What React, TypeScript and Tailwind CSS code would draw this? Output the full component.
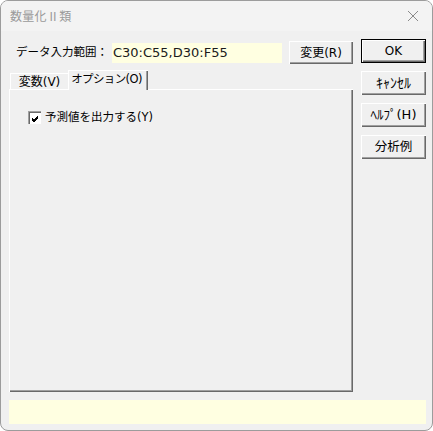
import React from "react";

const jp = { fontFamily: '"DejaVu Sans", "Noto Sans CJK JP", sans-serif' };

function Btn({ label, def, size }: { label: string; def?: boolean; size?: string }) {
  return (
    <div
      className={
        "w-[65px] h-[24px] flex items-center justify-center whitespace-nowrap text-black bg-[#f0f0f0] " +
        (size ?? "text-[12px]") +
        " " +
        (def
          ? "border border-black shadow-[inset_1px_1px_0_#ffffff,inset_-1px_-1px_0_#696969,inset_-2px_-2px_0_#a0a0a0]"
          : "shadow-[inset_1px_1px_0_#ffffff,inset_-1px_-1px_0_#696969,inset_-2px_-2px_0_#a0a0a0]")
      }
      style={jp}
    >
      {label}
    </div>
  );
}

export default function App() {
  return (
    <div className="w-[433px] h-[431px] bg-white" style={jp}>
      <div className="w-[433px] h-[431px] rounded-[8px] border border-[#9c9c9c] bg-[#f0f0f0] flex flex-col overflow-hidden">
        {/* title bar */}
        <div className="h-[30px] shrink-0 flex items-center justify-between pl-[9px] pr-[13px] bg-[#f3f3f3]">
          <span
            className="text-[12px] text-[#9a9a9a] tracking-[0.3px]"
            style={{ fontFamily: '"Noto Sans CJK JP", sans-serif' }}
          >
            数量化Ⅱ類
          </span>
          <svg width="12" height="12" viewBox="0 0 12 12" className="mt-[-1px]">
            <path d="M1 1 L11 11 M11 1 L1 11" stroke="#8a8a8a" strokeWidth="1" fill="none" />
          </svg>
        </div>
        {/* body */}
        <div className="flex-1 pl-[8px] flex flex-col">
          <div className="flex items-start">
            {/* left column */}
            <div className="w-[344px] mt-[10px] flex flex-col">
              <div className="h-[23px] flex items-center">
                <span className="ml-[7px] text-[11.5px] text-black w-[96px] whitespace-nowrap">データ入力範囲：</span>
                <div
                  className="w-[170px] h-[20px] bg-[#ffffe1] flex items-center pl-[1px] text-[13px] text-[#1a1a1a] whitespace-nowrap"
                  style={{ fontFamily: '"DejaVu Sans", sans-serif' }}
                >
                  C30:C55,D30:F55
                </div>
                <div className="ml-auto">
                  <div className="w-[64px] h-[23px] flex items-center justify-center whitespace-nowrap text-[12px] text-black bg-[#f0f0f0] shadow-[inset_1px_1px_0_#ffffff,inset_-1px_-1px_0_#696969,inset_-2px_-2px_0_#a0a0a0]">
                    変更(R)
                  </div>
                </div>
              </div>
              {/* tabs */}
              <div className="mt-[6px] h-[19px] flex items-end">
                <div className="ml-[1px] w-[58px] h-[16px] flex items-center justify-center whitespace-nowrap text-[12px] text-black border-l border-t border-white">
                  変数(V)
                </div>
                <div className="relative z-10 -mb-px w-[80px] h-[20px] flex items-center justify-center pb-[2px] pr-[4px] whitespace-nowrap text-[11.5px] tracking-[-0.6px] text-black bg-[#f0f0f0] border-l border-t border-white shadow-[inset_-1px_0_0_#696969,inset_-2px_0_0_#a0a0a0]">
                  オプション(O)
                </div>
              </div>
              {/* panel */}
              <div className="h-[303px] border-l border-t border-white shadow-[inset_-1px_-1px_0_#696969,inset_-2px_-2px_0_#a0a0a0] pt-[19px] pl-[18px]">
                <div className="flex items-center">
                  <div className="w-[13px] h-[13px] bg-white shadow-[inset_1px_1px_0_#a0a0a0,inset_2px_2px_0_#696969] flex items-center justify-center">
                    <svg width="9" height="9" viewBox="0 0 9 9" className="ml-[1px] mt-[1px]">
                      <path d="M1 4 L3 6 L7 2 M1 5 L3 7 L7 3 M1 6 L3 8 L7 4" stroke="#000" strokeWidth="1" fill="none" shapeRendering="crispEdges" />
                    </svg>
                  </div>
                  <span className="ml-[4px] text-[11.5px] text-black whitespace-nowrap">予測値を出力する(Y)</span>
                </div>
              </div>
            </div>
            {/* right column */}
            <div className="ml-[8px] mt-[8px] flex flex-col gap-[8px]">
              <Btn label="OK" def />
              <Btn label="ｷｬﾝｾﾙ" size="text-[14px]" />
              <Btn label="ﾍﾙﾌﾟ(H)" size="text-[13px]" />
              <Btn label="分析例" size="text-[12.5px]" />
            </div>
          </div>
          <div className="mt-[8px] w-[417px] h-[24px] bg-[#ffffe1]" />
        </div>
      </div>
    </div>
  );
}
